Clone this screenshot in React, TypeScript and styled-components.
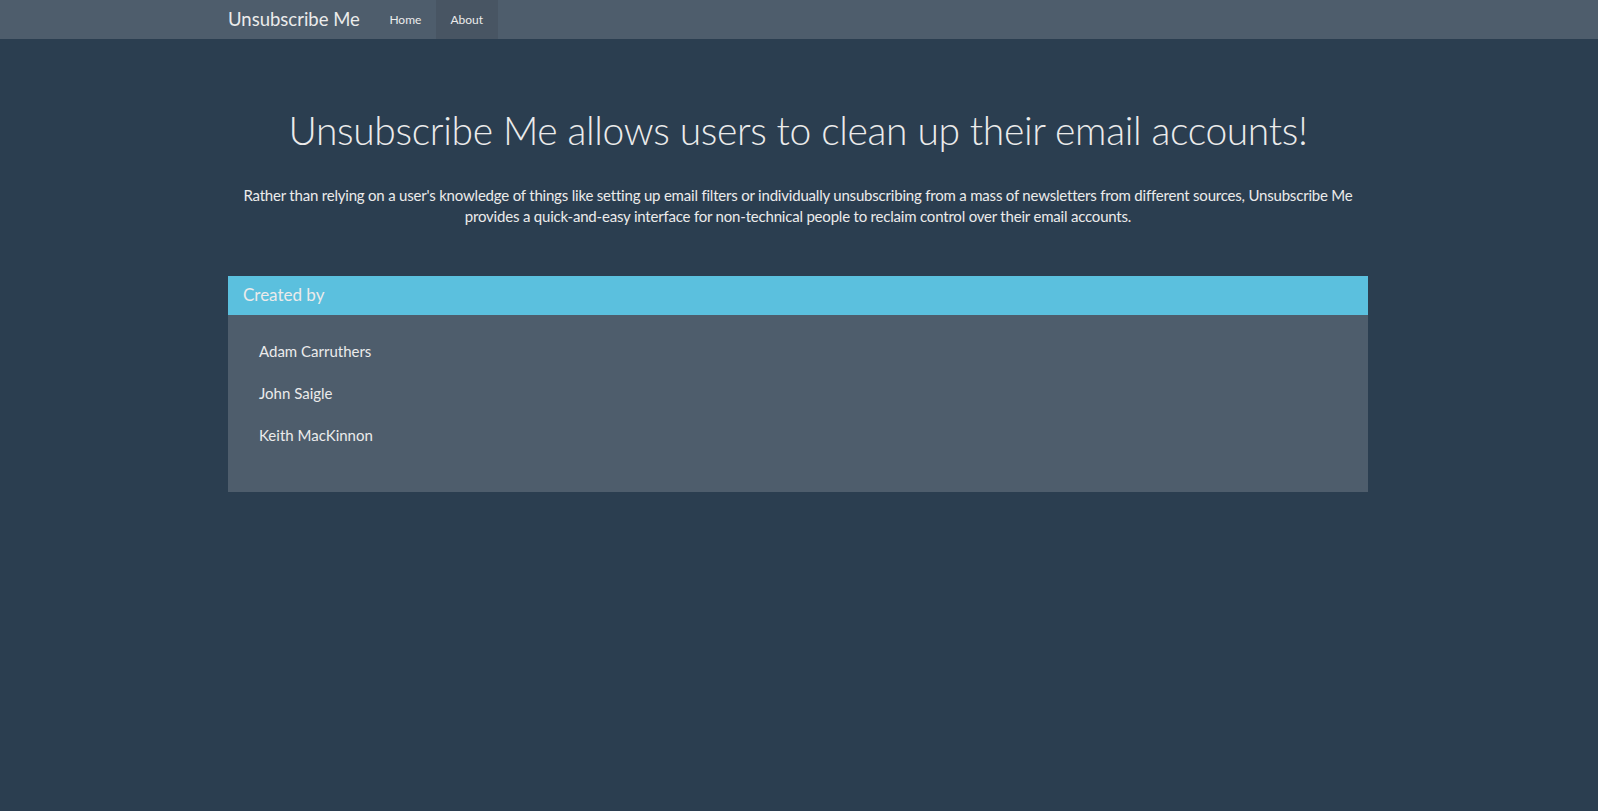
import React from "react";
import styled, { createGlobalStyle } from "styled-components";

const Global = createGlobalStyle`
  html, body { margin: 0; padding: 0; }
  body {
    background: #2b3e50;
    color: #ebebeb;
    font-family: Lato, "Open Sans", "Liberation Sans", sans-serif;
    font-size: 15px;
    line-height: 1.42857;
    min-height: 811px;
  }
  * { box-sizing: border-box; }
`;

const Navbar = styled.nav`
  height: 39px;
  background: #4e5d6c;
`;

const NavInner = styled.div`
  width: 1142px;
  padding-right: 2px;
  margin: 0 auto;
  display: flex;
  align-items: stretch;
  height: 100%;
`;

const Brand = styled.a`
  font-size: 18.5px;
  color: #ebebeb;
  display: flex;
  align-items: center;
  padding-right: 15px;
  text-decoration: none;
`;

const NavLink = styled.a<{ $active?: boolean }>`
  font-size: 12px;
  color: #ebebeb;
  display: flex;
  align-items: center;
  padding: 0 14.5px;
  text-decoration: none;
  background: ${(p) => (p.$active ? "#485563" : "transparent")};
`;

const Container = styled.main`
  width: 1142px;
  padding-right: 2px;
  margin: 0 auto;
`;

const Jumbo = styled.section`
  text-align: center;
  padding-top: 70px;
`;

const Title = styled.h1`
  font-size: 39px;
  font-weight: 300;
  letter-spacing: -0.35px;
  line-height: 1.1;
  margin: 0 0 33px;
  color: #ebebeb;
`;

const Lead = styled.p`
  font-size: 15px;
  letter-spacing: -0.2px;
  margin: 0;
  padding: 0 4px;
`;

const Panel = styled.section`
  margin-top: 48px;
  background: #4e5d6c;
`;

const PanelHeading = styled.div`
  background: #5bc0de;
  color: #ebebeb;
  font-size: 17px;
  height: 39px;
  padding: 0 15px;
  display: flex;
  align-items: center;
`;

const PanelBody = styled.div`
  padding: 16px 15px 15px;
`;

const List = styled.ul`
  list-style: none;
  margin: 0 0 20px;
  padding: 0;
`;

const Item = styled.li`
  padding: 10px 15px 11px 16px;
  font-size: 15px;
  line-height: 21px;
`;

export default function App() {
  return (
    <>
      <Global />
      <Navbar>
        <NavInner>
          <Brand href="#">Unsubscribe Me</Brand>
          <NavLink href="#">Home</NavLink>
          <NavLink href="#" $active>
            About
          </NavLink>
        </NavInner>
      </Navbar>
      <Container>
        <Jumbo>
          <Title>Unsubscribe Me allows users to clean up their email accounts!</Title>
          <Lead>
            Rather than relying on a user's knowledge of things like setting up email filters or
            individually unsubscribing from a mass of newsletters from different sources,
            Unsubscribe Me provides a quick-and-easy interface for non-technical people to reclaim
            control over their email accounts.
          </Lead>
        </Jumbo>
        <Panel>
          <PanelHeading>Created by</PanelHeading>
          <PanelBody>
            <List>
              <Item>Adam Carruthers</Item>
              <Item>John Saigle</Item>
              <Item>Keith MacKinnon</Item>
            </List>
          </PanelBody>
        </Panel>
      </Container>
    </>
  );
}
